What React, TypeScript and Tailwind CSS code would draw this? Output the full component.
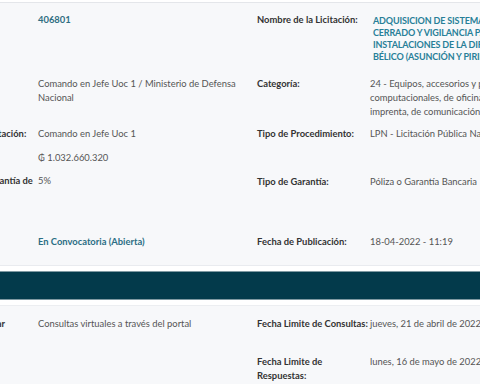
import type { ReactNode } from "react";

function Row({
  label,
  children,
  className,
}: {
  label?: ReactNode;
  children: ReactNode;
  className: string;
}) {
  return (
    <div className={`flex ${className}`}>
      <div className="w-[112px] mr-[1px] shrink-0 font-bold text-[#333]">{label}</div>
      <div className="flex-1 text-[#555] whitespace-nowrap">{children}</div>
    </div>
  );
}

export default function App() {
  return (
    <div className="w-[480px] h-[384px] overflow-hidden bg-[#f7f8fa] font-['Lato','DejaVu_Sans',sans-serif] text-[9.4px] leading-[14px]">
      <div className="h-[3px] bg-white border-b border-[#e4e6ea]" />

      <div className="flex ml-[-75px] pt-[10px] pb-[16px] border-b border-[#e9ebef]">
        {/* left column */}
        <div className="w-[332px] shrink-0 flex flex-col">
          <Row label="ID de Licitación:" className="h-[64px]">
            <span className="font-bold text-[#2f6e82]">406801</span>
          </Row>
          <Row label="Convocante:" className="h-[50px]">
            <span className="whitespace-normal">
              Comando en Jefe Uoc 1 / Ministerio de Defensa Nacional
            </span>
          </Row>
          <Row label="Unidad de Contratación:" className="h-[24px]">
            Comando en Jefe Uoc 1
          </Row>
          <Row label="Monto Estimado:" className="h-[23px]">
            ₲ 1.032.660.320
          </Row>
          <Row label="Porcentaje de Garantía de Oferta:" className="h-[61px]">
            5%
          </Row>
          <Row label="Estado:" className="h-[14px]">
            <span className="font-bold text-[#2b6e84]">En Convocatoria (Abierta)</span>
          </Row>
        </div>

        {/* right column */}
        <div className="w-[420px] shrink-0 flex flex-col">
          <Row label="Nombre de la Licitación:" className="h-[64px]">
            <div className="pt-[2px] pl-[3px] font-bold text-[9px] leading-[12px] tracking-[-0.15px] text-[#287f98]">
              ADQUISICION DE SISTEMAS DE CIRCUITO
              <br />
              CERRADO Y VIGILANCIA PARA LAS
              <br />
              INSTALACIONES DE LA DIRECCIÓN DE MATERIAL
              <br />
              BÉLICO (ASUNCIÓN Y PIRIBEBUY)
            </div>
          </Row>
          <Row label="Categoría:" className="h-[50px]">
            24 - Equipos, accesorios y programas
            <br />
            computacionales, de oficina, educativos, de
            <br />
            imprenta, de comunicación y señalamiento
          </Row>
          <Row label="Tipo de Procedimiento:" className="h-[48px]">
            LPN - Licitación Pública Nacional
          </Row>
          <Row label="Tipo de Garantía:" className="h-[60px]">
            Póliza o Garantía Bancaria
          </Row>
          <Row label="Fecha de Publicación:" className="h-[14px]">
            18-04-2022 - 11:19
          </Row>
        </div>
      </div>

      <div className="h-[5px] bg-white" />
      <div className="h-[29px] bg-[#033a4b] border-y border-[#7f99a2]" />
      <div className="h-[6px] bg-white border-b border-[#eceef1]" />

      <div className="flex ml-[-75px] pt-[11px]">
        <div className="w-[332px] shrink-0 flex flex-col">
          <Row label="Modo de Consultar" className="h-[38px]">
            Consultas virtuales a través del portal
          </Row>
        </div>
        <div className="w-[420px] shrink-0 flex flex-col">
          <Row label="Fecha Limite de Consultas:" className="h-[38px]">
            jueves, 21 de abril de 2022 - 10:00
          </Row>
          <Row label="Fecha Limite de Respuestas:" className="h-[28px]">
            lunes, 16 de mayo de 2022 - 10:00
          </Row>
        </div>
      </div>
    </div>
  );
}
